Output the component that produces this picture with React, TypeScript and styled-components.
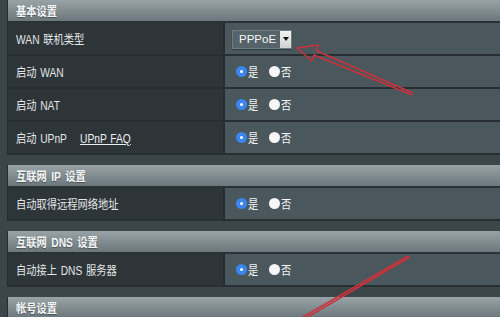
import React from "react";
import styled, { createGlobalStyle } from "styled-components";

const FONT = `"Liberation Sans Narrow", "Liberation Sans", "Noto Sans CJK SC", sans-serif`;

const Global = createGlobalStyle`
  html, body { margin: 0; padding: 0; background: #3c4548; }
  body { width: 500px; height: 317px; overflow: hidden; font-family: ${FONT}; }
`;

const Page = styled.div`
  position: relative;
  width: 500px;
  height: 317px;
  overflow: hidden;
  background: #3c4548;
  padding-left: 7px;
  box-sizing: border-box;
  display: flex;
  flex-direction: column;
  gap: 10px;
`;

const Section = styled.section`
  display: flex;
  flex-direction: column;
  width: 510px;
  border-left: 1px solid #252d30;
`;

/* The screenshot is horizontally compressed: text is drawn narrower than its height */
const Text = styled.span`
  display: inline-block;
  white-space: nowrap;
  transform: scaleX(0.82);
  transform-origin: left center;
`;

const Header = styled.div`
  height: 23px;
  box-sizing: border-box;
  display: flex;
  align-items: center;
  padding-left: 8px;
  background: linear-gradient(#99a3a7, #6b777c);
  border-bottom: 2px solid #2a3235;
  color: #f4f6f6;
  font-size: 12.5px;
  font-weight: bold;
  word-spacing: 2px;
  text-shadow: 0 1px 1px rgba(0,0,0,0.35);
`;

const Row = styled.div`
  height: 33px;
  box-sizing: border-box;
  display: grid;
  grid-template-columns: 217px 1fr;
  border-bottom: 2px solid #272f32;
`;

const Label = styled.div`
  background: #2d3539;
  color: #e3e6e7;
  font-size: 12.5px;
  word-spacing: 1px;
  display: flex;
  align-items: center;
  padding-left: 8px;
  border-right: 2px solid #252d30;
`;

const Link = styled.span`
  margin-left: 16px;
  text-decoration: underline;
  color: #eef0f0;
`;

const Value = styled.div`
  background: #4a575c;
  display: flex;
  align-items: center;
  padding-left: 11px;
  color: #f2f4f4;
  font-size: 12.5px;
`;

const Select = styled.div`
  display: flex;
  align-items: center;
  height: 19px;
  box-sizing: border-box;
  border: 1px solid #6f7c80;
  background: #56646a;
  margin-top: 1px;
  margin-left: -4px;
  padding-left: 6px;
  font-family: "Liberation Sans", sans-serif;
  font-size: 11.5px;
  color: #f5f7f7;
  box-shadow: 0 1px 1px rgba(0,0,0,0.3);
`;

const SelectBtn = styled.div`
  width: 11px;
  height: 17px;
  margin-left: 4px;
  background: linear-gradient(#f2f2f2, #cfd2d3);
  display: flex;
  align-items: center;
  justify-content: center;
  &::after {
    content: "";
    border-left: 3px solid transparent;
    border-right: 3px solid transparent;
    border-top: 4px solid #111;
  }
`;

const RadioGroup = styled.div`
  display: flex;
  align-items: center;
`;

const Radio = styled.span<{ $on?: boolean }>`
  width: 11px;
  height: 11px;
  border-radius: 50%;
  box-sizing: border-box;
  background: ${(p) => (p.$on ? "#3b86ee" : "#f7f7f7")};
  display: inline-flex;
  align-items: center;
  justify-content: center;
  margin-right: 1px;
  &::after {
    content: "";
    width: 3px;
    height: 3px;
    border-radius: 50%;
    background: ${(p) => (p.$on ? "#ffffff" : "transparent")};
  }
`;

const RadioText = styled(Text)`
  margin-right: 8px;
`;

const Overlay = styled.svg`
  position: absolute;
  left: 0;
  top: 0;
  pointer-events: none;
`;

const YesNo = () => (
  <RadioGroup>
    <Radio $on />
    <RadioText>是</RadioText>
    <Radio />
    <RadioText>否</RadioText>
  </RadioGroup>
);

export default function App() {
  return (
    <>
      <Global />
      <Page>
        <Section>
          <Header><Text>基本设置</Text></Header>
          <Row>
            <Label><Text>WAN 联机类型</Text></Label>
            <Value>
              <Select>
                PPPoE
                <SelectBtn />
              </Select>
            </Value>
          </Row>
          <Row>
            <Label><Text>启动 WAN</Text></Label>
            <Value><YesNo /></Value>
          </Row>
          <Row>
            <Label><Text>启动 NAT</Text></Label>
            <Value><YesNo /></Value>
          </Row>
          <Row>
            <Label>
              <Text>
                启动 UPnP
                <Link>UPnP FAQ</Link>
              </Text>
            </Label>
            <Value><YesNo /></Value>
          </Row>
        </Section>
        <Section>
          <Header><Text>互联网 IP 设置</Text></Header>
          <Row>
            <Label><Text>自动取得远程网络地址</Text></Label>
            <Value><YesNo /></Value>
          </Row>
        </Section>
        <Section>
          <Header><Text>互联网 DNS 设置</Text></Header>
          <Row>
            <Label><Text>自动接上 DNS 服务器</Text></Label>
            <Value><YesNo /></Value>
          </Row>
        </Section>
        <Section>
          <Header><Text>帐号设置</Text></Header>
        </Section>
        <Overlay width="500" height="317" viewBox="0 0 500 317">
          <g fill="none" stroke="#c8333c" strokeWidth="1.6" strokeLinejoin="round">
            <polyline points="413,93 317,51 318,45 297,48 312,61 314,55 412,95" />
            <line x1="408" y1="256" x2="303" y2="317" />
            <line x1="410" y1="257" x2="306" y2="318" />
          </g>
        </Overlay>
      </Page>
    </>
  );
}
